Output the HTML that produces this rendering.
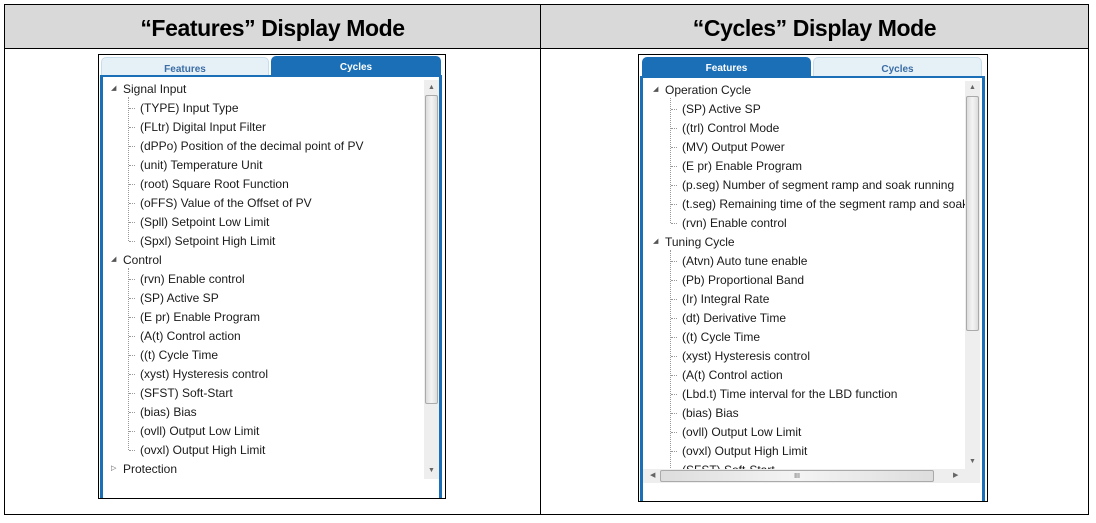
<!DOCTYPE html>
<html><head><meta charset="utf-8"><style>
*{margin:0;padding:0;box-sizing:border-box}
body{width:1096px;height:523px;background:#fff;position:relative;overflow:hidden;font-family:"Liberation Sans",sans-serif}
.a{position:absolute}
.hdr{top:4px;height:45px;background:#d9d9d9;border:1px solid #000;font-weight:bold;font-size:23px;text-align:center;line-height:46px;letter-spacing:-0.4px}
.cell{border:1px solid #000}
.frame{border:1px solid #000;background:#fff}
.tab{height:20px;font-size:10px;font-weight:bold;text-align:center;line-height:23px;border-radius:5px 5px 0 0}
.on{background:#1a6fb7;color:#fff}
.off{background:#e6f0f7;color:#3a6ea5;border:1px solid #c9dce9;border-bottom:none}
.box{border:3px solid #1a6fb7;border-top:2px solid #1a6fb7;border-bottom:none}
.t{position:absolute;font-size:12px;color:#1a1a1a;white-space:nowrap;line-height:14px}
.vd{position:absolute;border-left:1px dotted #999;width:0}
.hd{position:absolute;border-top:1px dotted #999;width:6px;height:0}
.sb{background:#eee}
.th{background:linear-gradient(90deg,#ddd,#f4f4f4,#ddd);border:1px solid #aaa;border-radius:2px}
.clip{position:absolute;left:0;top:0;overflow:hidden}
</style></head><body>
<div class="a cell" style="left:4px;top:4px;width:1085px;height:511px"></div>
<div class="a" style="left:540px;top:4px;width:1px;height:511px;background:#000"></div>
<div class="a hdr" style="left:4px;width:537px">“Features” Display Mode</div>
<div class="a hdr" style="left:540px;width:549px">“Cycles” Display Mode</div>

<!-- LEFT -->
<div class="a frame" style="left:98px;top:54px;width:348px;height:445px"></div>
<div class="a tab off" style="left:101px;top:57px;width:168px">Features</div>
<div class="a tab on" style="left:271px;top:56px;width:170px">Cycles</div>
<div class="a box" style="left:100px;top:75px;width:342px;height:423px"></div>
<div class="a sb" style="left:424px;top:80px;width:15px;height:399px"></div>
<div class="a th" style="left:425px;top:95px;width:13px;height:309px"></div>
<div class="a" style="left:428px;top:84px;font-size:7px;color:#666">▲</div>
<div class="a" style="left:428px;top:467px;font-size:7px;color:#666">▼</div>
<div class="clip" style="width:424px;height:479px"><div id="L"></div></div>

<!-- RIGHT -->
<div class="a frame" style="left:638px;top:54px;width:350px;height:448px"></div>
<div class="a tab on" style="left:642px;top:57px;width:169px">Features</div>
<div class="a tab off" style="left:813px;top:57px;width:169px">Cycles</div>
<div class="a box" style="left:640px;top:76px;width:345px;height:425px"></div>
<div class="a sb" style="left:965px;top:81px;width:15px;height:388px"></div>
<div class="a th" style="left:966px;top:96px;width:13px;height:235px"></div>
<div class="a" style="left:969px;top:84px;font-size:7px;color:#666">▲</div>
<div class="a" style="left:969px;top:458px;font-size:7px;color:#666">▼</div>
<div class="a sb" style="left:643px;top:469px;width:337px;height:14px"></div>
<div class="a th" style="left:660px;top:470px;width:274px;height:12px;font-size:7px;text-align:center;line-height:11px;color:#555">III</div>
<div class="a" style="left:650px;top:471px;font-size:7px;color:#666">◀</div>
<div class="a" style="left:953px;top:471px;font-size:7px;color:#666">▶</div>
<div class="clip" style="width:965px;height:469px"><div id="R"></div></div>

<script>
function tree(el,x0,y0,data){
 let h='',y=y0;
 data.forEach(g=>{
  h+=`<div class="t" style="left:${x0-12}px;top:${y-7}px;font-size:7px;color:#555">${g.open?'◢':'▷'}</div>`;
  h+=`<div class="t" style="left:${x0}px;top:${y-7}px">${g.n}</div>`;
  const start=y;
  y+=19;
  (g.c||[]).forEach(c=>{
    h+=`<div class="hd" style="left:${x0+6}px;top:${y}px"></div>`;
    h+=`<div class="t" style="left:${x0+17}px;top:${y-7}px">${c}</div>`;
   y+=19;
  });
  if(g.c) h+=`<div class="vd" style="left:${x0+5}px;top:${start+8}px;height:${y-19-start-8}px"></div>`;
 });
 el.innerHTML=h;
}
tree(document.getElementById('L'),123,89,[
 {n:'Signal Input',open:1,c:['(TYPE) Input Type','(FLtr) Digital Input Filter','(dPPo) Position of the decimal point of PV','(unit) Temperature Unit','(root) Square Root Function','(oFFS) Value of the Offset of PV','(Spll) Setpoint Low Limit','(Spxl) Setpoint High Limit']},
 {n:'Control',open:1,c:['(rvn) Enable control','(SP) Active SP','(E pr) Enable Program','(A(t) Control action','((t) Cycle Time','(xyst) Hysteresis control','(SFST) Soft-Start','(bias) Bias','(ovll) Output Low Limit','(ovxl) Output High Limit']},
 {n:'Protection',open:0}
]);
tree(document.getElementById('R'),665,90,[
 {n:'Operation Cycle',open:1,c:['(SP) Active SP','((trl) Control Mode','(MV) Output Power','(E pr) Enable Program','(p.seg) Number of segment ramp and soak running','(t.seg) Remaining time of the segment ramp and soak','(rvn) Enable control']},
 {n:'Tuning Cycle',open:1,c:['(Atvn) Auto tune enable','(Pb) Proportional Band','(Ir) Integral Rate','(dt) Derivative Time','((t) Cycle Time','(xyst) Hysteresis control','(A(t) Control action','(Lbd.t) Time interval for the LBD function','(bias) Bias','(ovll) Output Low Limit','(ovxl) Output High Limit','(SFST) Soft-Start']}
]);
</script>
</body></html>
